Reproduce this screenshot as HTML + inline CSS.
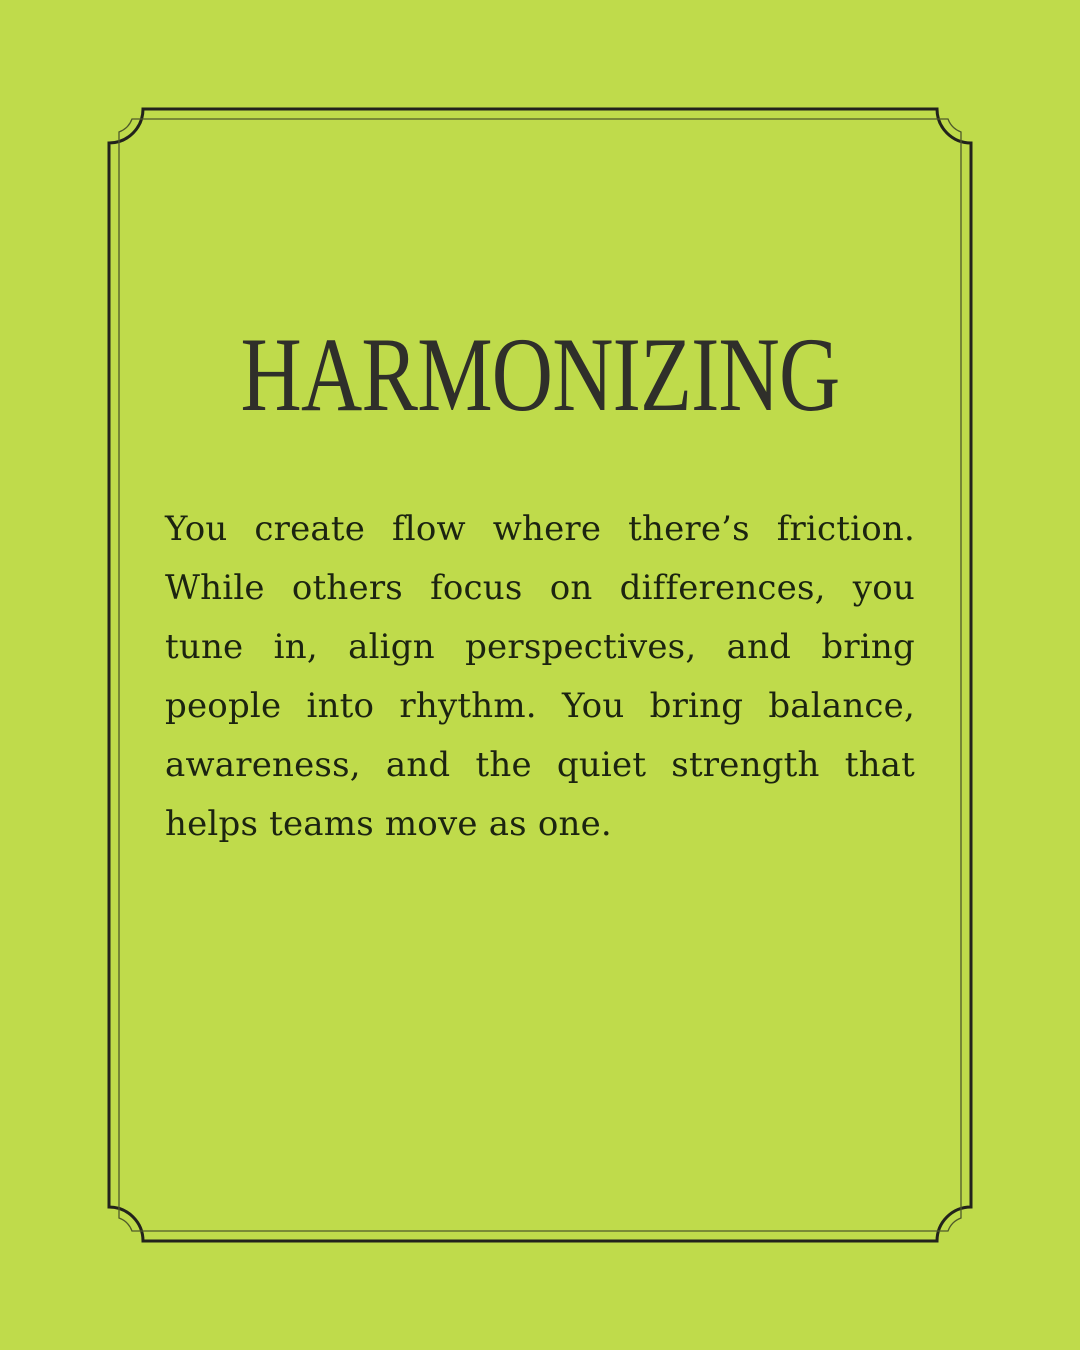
<!DOCTYPE html>
<html><head><meta charset="utf-8"><style>
html,body{margin:0;padding:0}
body{width:1080px;height:1350px;background:#bfdb4b;position:relative;overflow:hidden}
svg{position:absolute;left:0;top:0}
h1{position:absolute;top:322px;left:0;width:1080px;margin:0;text-align:center;font-family:"Liberation Serif",serif;font-weight:normal;font-size:106px;line-height:106px;color:#2f2f2a;transform:scaleX(0.8);transform-origin:540px 0;letter-spacing:-1px}
.t{position:absolute;left:165px;top:500px;width:750px;margin:0;font-family:"DejaVu Serif",serif;font-size:34px;line-height:59px;color:#1c2410;letter-spacing:0.2px}
.t span{display:block;text-align:justify;text-align-last:justify;white-space:nowrap}
.t span.l{text-align-last:left}
</style></head><body>
<svg width="1080" height="1350" viewBox="0 0 1080 1350">
<path d="M143 109 H937 A34 34 0 0 0 971 143 V1207 A34 34 0 0 0 937 1241 H143 A34 34 0 0 0 109 1207 V143 A34 34 0 0 0 143 109 Z" fill="none" stroke="#22221c" stroke-width="3"/>
<path d="M132 119 H948 A22 22 0 0 0 961 132 V1218 A22 22 0 0 0 948 1231 H132 A22 22 0 0 0 119 1218 V132 A22 22 0 0 0 132 119 Z" fill="none" stroke="#4f5a2a" stroke-width="1.3"/>
</svg>
<h1>HARMONIZING</h1>
<div class="t">
<span>You create flow where there’s friction.</span>
<span>While others focus on differences, you</span>
<span>tune in, align perspectives, and bring</span>
<span>people into rhythm. You bring balance,</span>
<span>awareness, and the quiet strength that</span>
<span class="l">helps teams move as one.</span>
</div>
</body></html>
